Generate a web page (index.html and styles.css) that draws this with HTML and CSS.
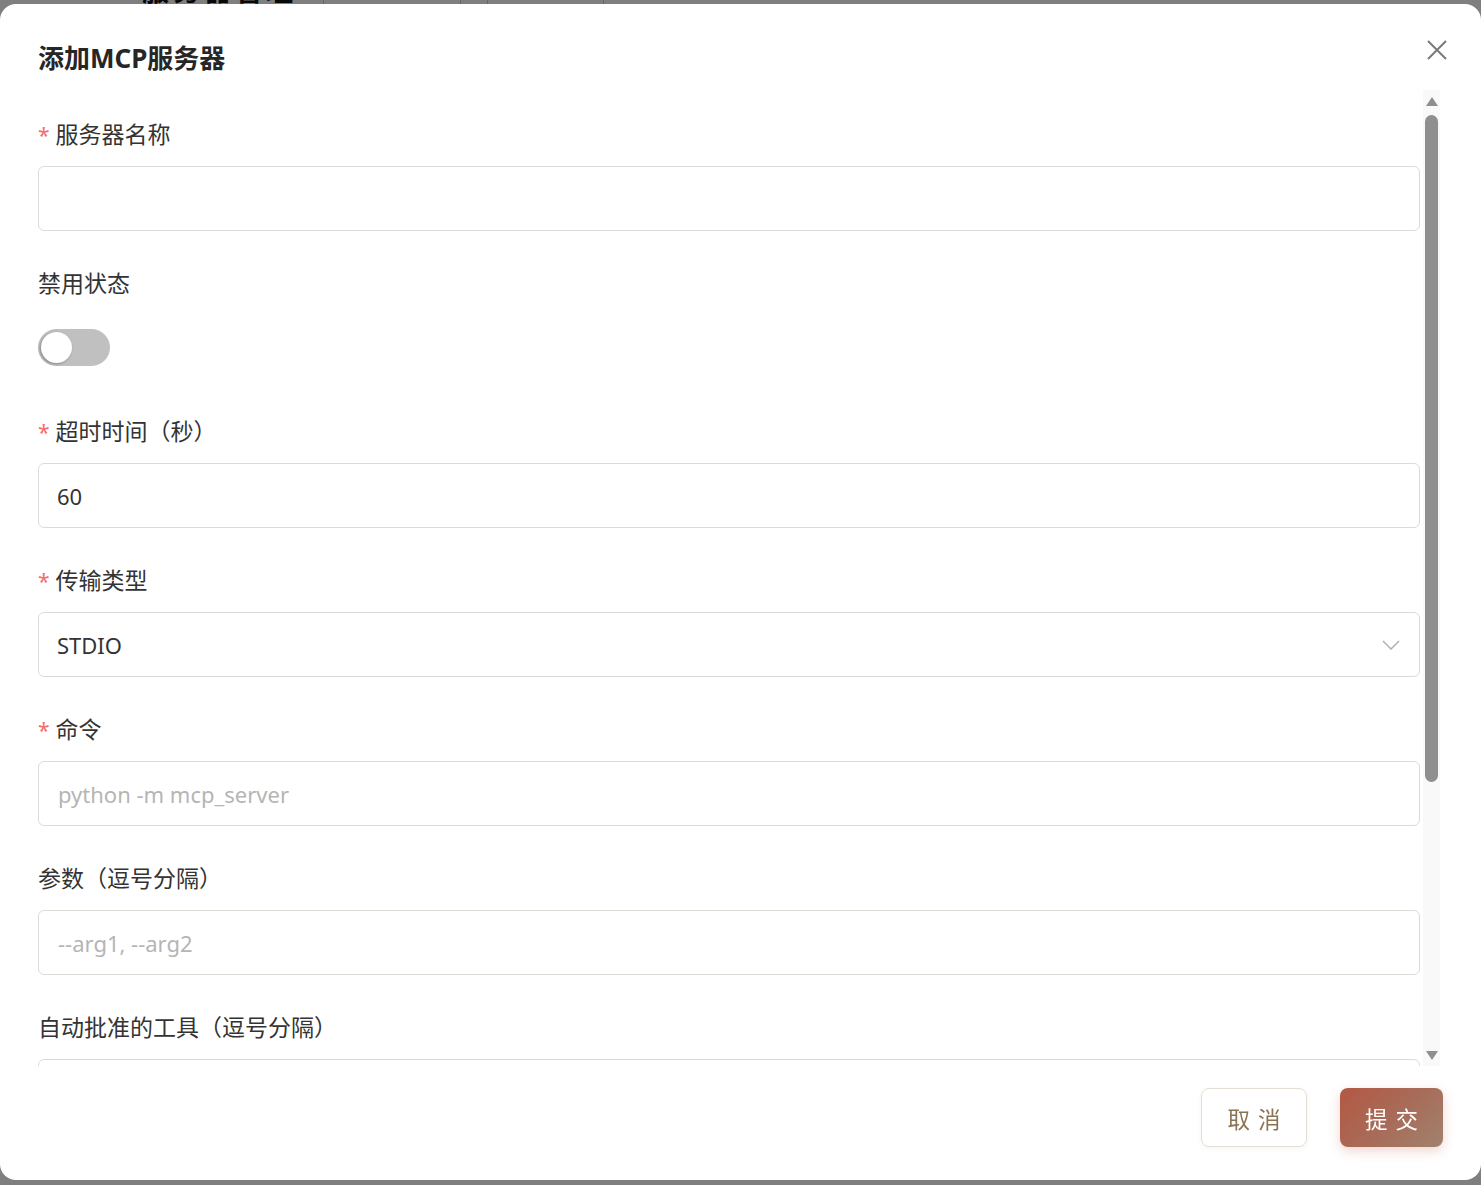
FILE: index.html
```html
<!DOCTYPE html>
<html lang="zh-CN">
<head>
<meta charset="utf-8">
<title>添加MCP服务器</title>
<link rel="stylesheet" href="styles.css">
</head>
<body>
<div class="page">
  <div class="page-head">
    <span class="page-title">服务器管理</span>
    <span class="page-col c1"></span>
    <span class="page-col c2"></span>
    <span class="page-col c3"></span>
    <span class="page-col c4"></span>
  </div>
</div>
<div class="overlay">
  <div class="modal">
    <div class="modal-header">
      <h2 class="modal-title">添加MCP服务器</h2>
      <button class="close-btn" type="button" aria-label="关闭">
        <svg width="20" height="20" viewBox="0 0 20 20"><path d="M1 1L19 19M19 1L1 19" stroke="#7a7a7a" stroke-width="2" fill="none"/></svg>
      </button>
    </div>
    <div class="modal-body">
      <div class="scroll-content">
        <div class="field">
          <div class="label"><span class="req">*</span>服务器名称</div>
          <div class="input"></div>
        </div>
        <div class="field">
          <div class="label">禁用状态</div>
          <div class="switch-row"><span class="switch"><span class="knob"></span></span></div>
        </div>
        <div class="field">
          <div class="label"><span class="req">*</span>超时时间（秒）</div>
          <div class="input"><span class="value">60</span></div>
        </div>
        <div class="field">
          <div class="label"><span class="req">*</span>传输类型</div>
          <div class="input select"><span class="value">STDIO</span>
            <svg class="chev" width="18" height="10" viewBox="0 0 18 10"><path d="M1 1L9 9L17 1" stroke="#b0b0b0" stroke-width="1.5" fill="none"/></svg>
          </div>
        </div>
        <div class="field">
          <div class="label"><span class="req">*</span>命令</div>
          <div class="input"><span class="placeholder">python -m mcp_server</span></div>
        </div>
        <div class="field">
          <div class="label">参数（逗号分隔）</div>
          <div class="input"><span class="placeholder">--arg1, --arg2</span></div>
        </div>
        <div class="field">
          <div class="label">自动批准的工具（逗号分隔）</div>
          <div class="input"><span class="placeholder">tool1, tool2</span></div>
        </div>
        <div class="field">
          <div class="label">环境变量（每行一个，KEY=VALUE）</div>
          <div class="input textarea"><span class="placeholder">API_KEY=xxx</span></div>
        </div>
      </div>
      <div class="scrollbar" aria-hidden="true">
        <div class="sb-btn"><span class="tri-up"></span></div>
        <div class="sb-track"><div class="sb-thumb"></div></div>
        <div class="sb-btn"><span class="tri-down"></span></div>
      </div>
    </div>
    <div class="modal-footer">
      <button class="btn btn-cancel" type="button">取消</button>
      <button class="btn btn-submit" type="button">提交</button>
    </div>
  </div>
</div>
</body>
</html>
```

FILE: styles.css
```css
html, body {
  margin: 0;
  height: 100%;
  overflow: hidden;
}
body {
  background: #ffffff;
  font-family: "Noto Sans", "Noto Sans CJK SC", sans-serif;
  color: #333333;
}

/* background page (mostly hidden by overlay) */
.page-head {
  display: flex;
  height: 60px;
  align-items: flex-end;
  margin-top: -40px;
}
.page-title {
  box-sizing: border-box;
  width: 323px;
  padding-left: 142px;
  font-family: "Noto Sans CJK SC", sans-serif;
  font-size: 27px;
  font-weight: 700;
  line-height: 60px;
  letter-spacing: 4px;
  color: #111;
  white-space: nowrap;
  overflow: hidden;
}
.page-col {
  width: 1px;
  height: 60px;
  background: #d8c8c0;
}
.c2 { margin-left: 136px; }
.c3 { margin-left: 26px; }
.c4 { margin-left: 115px; }

.overlay {
  position: fixed;
  inset: 0;
  background: rgba(0, 0, 0, 0.5);
  display: flex;
  flex-direction: column;
  padding-top: 4px;
}
.modal {
  width: 1481px;
  height: 1176px;
  background: #ffffff;
  border-radius: 16px;
  display: flex;
  flex-direction: column;
}
.modal-header {
  display: flex;
  justify-content: space-between;
  align-items: flex-start;
  padding: 36px 34px 14px 38px;
}
.modal-title {
  margin: 0;
  height: 36px;
  font-size: 26px;
  line-height: 36px;
  font-weight: 700;
  color: #262626;
}
.close-btn {
  width: 20px;
  height: 20px;
  padding: 0;
  border: 0;
  background: none;
  display: block;
}
.close-btn svg { display: block; }

.modal-body {
  flex: 1;
  min-height: 0;
  display: flex;
  margin: 0 41px 0 38px;
}
.scroll-content {
  flex: 1;
  min-width: 0;
  overflow: hidden;
  padding: 29px 3px 0 0;
}
.scrollbar {
  width: 17px;
  display: flex;
  flex-direction: column;
  background: #f9f9f9;
}
.sb-btn {
  height: 22px;
  display: flex;
  align-items: center;
  justify-content: center;
}
.tri-up {
  width: 0;
  height: 0;
  border-left: 6px solid transparent;
  border-right: 6px solid transparent;
  border-bottom: 9px solid #8f8f8f;
}
.tri-down {
  width: 0;
  height: 0;
  border-left: 6px solid transparent;
  border-right: 6px solid transparent;
  border-top: 9px solid #8f8f8f;
}
.sb-track {
  flex: 1;
  display: flex;
  justify-content: center;
}
.sb-thumb {
  width: 13px;
  height: 667px;
  margin-top: 3px;
  border-radius: 7px;
  background: #8f8f8f;
}

.field {
  margin-bottom: 37px;
}
.label {
  box-sizing: border-box;
  height: 32px;
  padding-bottom: 3px;
  font-family: "Noto Sans CJK SC", sans-serif;
  font-size: 23px;
  line-height: 29px;
  color: #333333;
  margin-bottom: 15px;
  white-space: nowrap;
}
.req {
  color: #f56c6c;
  font-family: "Noto Sans", sans-serif;
  font-size: 21px;
  margin-right: 6px;
}
.input {
  box-sizing: border-box;
  height: 65px;
  border: 1px solid #dedbd6;
  border-radius: 6px;
  padding: 0 18px;
  display: flex;
  align-items: center;
  font-size: 22px;
  line-height: 30px;
  color: #333333;
}
.placeholder {
  color: #b5b5b5;
  margin-left: 1px;
}
.select {
  justify-content: space-between;
}
.chev { display: block; margin-right: 1px; }
.textarea {
  height: 206px;
  align-items: flex-start;
  padding-top: 16px;
}
.switch-row {
  height: 64px;
  display: flex;
  align-items: center;
  padding-top: 1px;
  box-sizing: border-box;
}
.switch {
  width: 72px;
  height: 37px;
  border-radius: 19px;
  background: #c0c0c0;
  display: flex;
  align-items: center;
  padding-left: 3px;
  box-sizing: border-box;
}
.knob {
  width: 31px;
  height: 31px;
  border-radius: 50%;
  background: #ffffff;
  box-shadow: -1px 1px 3px rgba(0, 0, 0, 0.3);
}

.modal-footer {
  display: flex;
  justify-content: flex-end;
  gap: 33px;
  padding: 22px 38px 33px;
}
.btn {
  height: 59px;
  border-radius: 8px;
  font-family: "Noto Sans CJK SC", sans-serif;
  font-size: 22.5px;
  letter-spacing: 8px;
  padding: 0 0 0 8px;
}
.btn-cancel {
  width: 106px;
  background: #ffffff;
  border: 1px solid #e3ddd4;
  color: #8a7352;
  box-shadow: 0 2px 6px rgba(0, 0, 0, 0.04);
}
.btn-submit {
  width: 103px;
  border: 0;
  color: #ffffff;
  background: linear-gradient(135deg, #b35843 0%, #a86b58 50%, #a0826d 100%);
  box-shadow: 0 4px 12px rgba(190, 90, 70, 0.25);
}
```
